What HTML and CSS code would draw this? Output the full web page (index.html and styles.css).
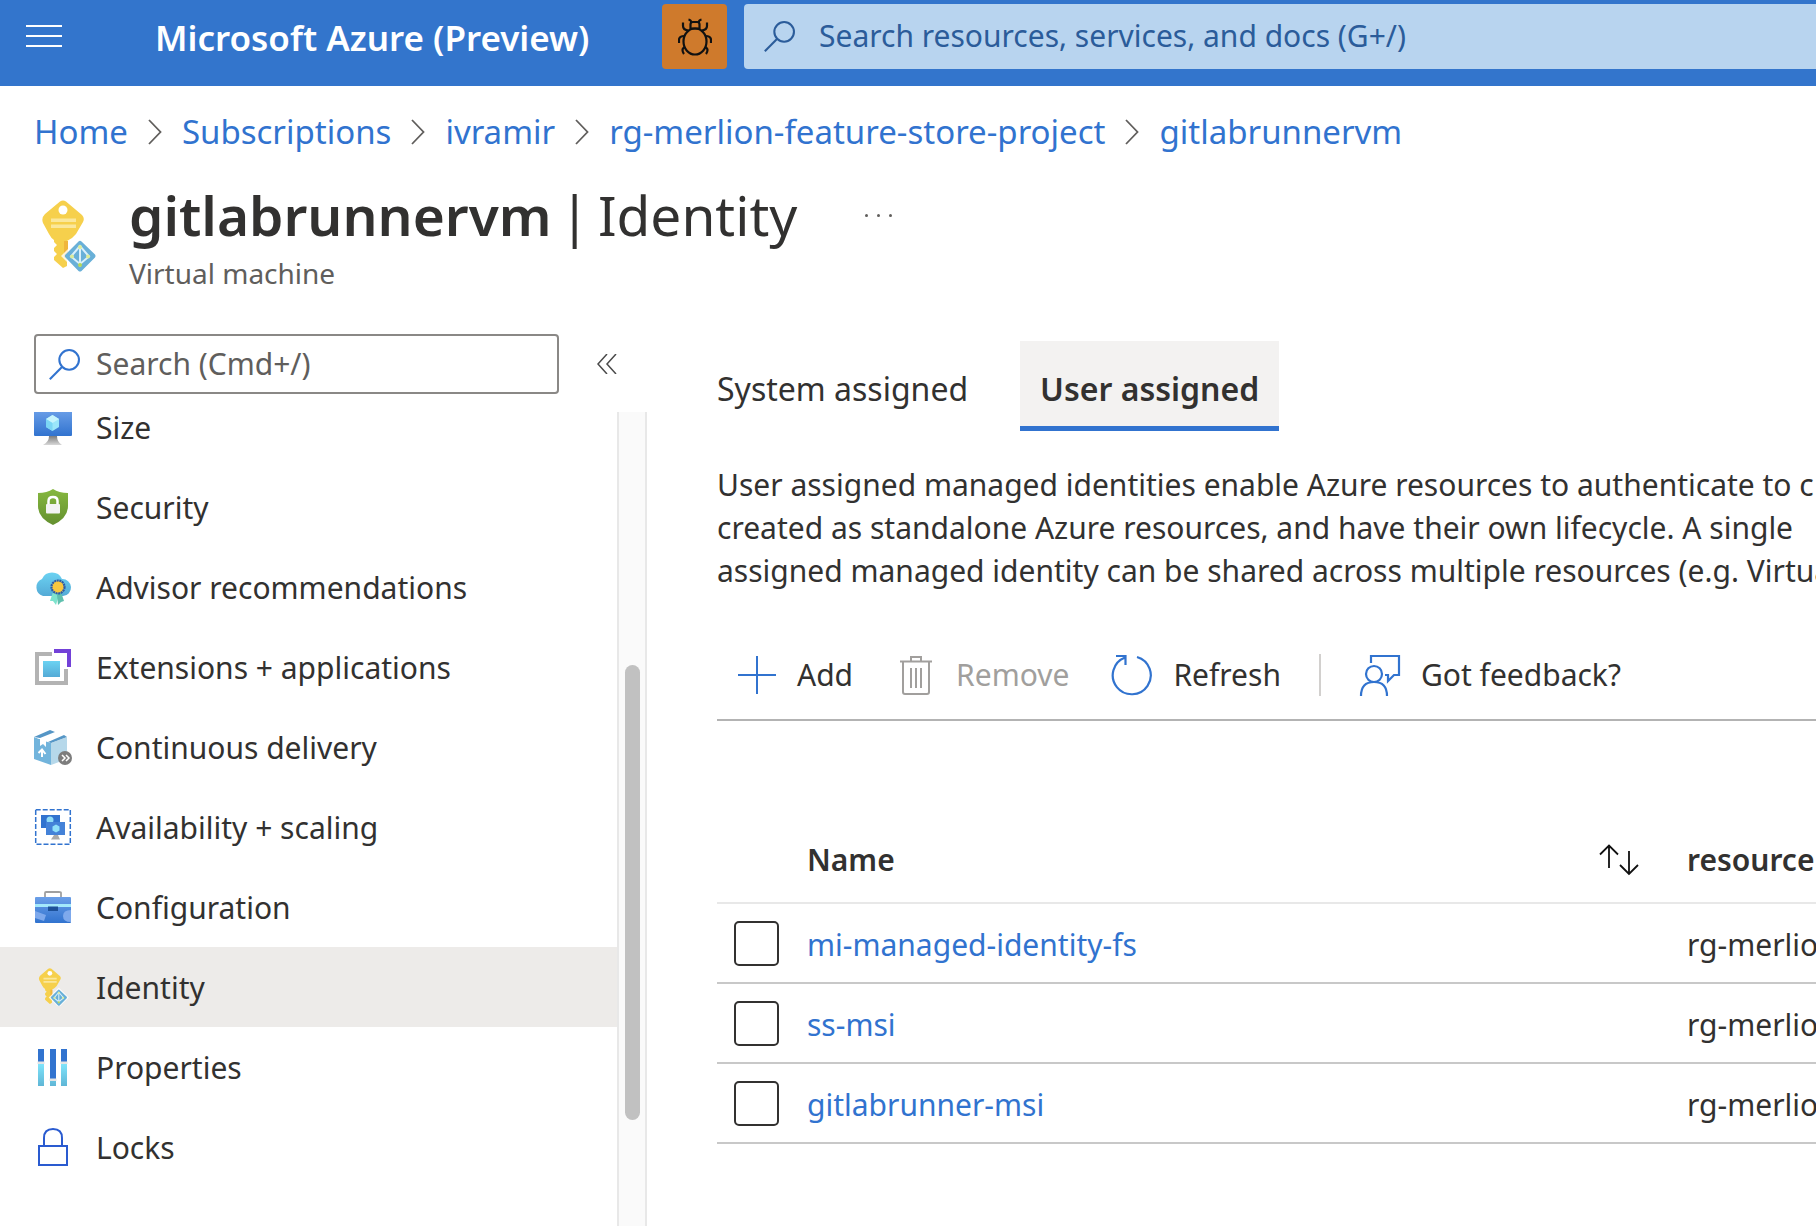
FILE: index.html
```html
<!DOCTYPE html>
<html lang="en">
<head>
<meta charset="utf-8">
<title>gitlabrunnervm | Identity - Microsoft Azure</title>
<link rel="stylesheet" href="styles.css">
</head>
<body>
<svg class="defs" aria-hidden="true">
  <defs>
    <linearGradient id="blue" x1="0" y1="0" x2="0" y2="1"><stop offset="0" stop-color="#6b9fe8"/><stop offset="1" stop-color="#3173cf"/></linearGradient>
    <linearGradient id="green" x1="0" y1="0" x2="0" y2="1"><stop offset="0" stop-color="#86b83f"/><stop offset="1" stop-color="#64902f"/></linearGradient>
    <linearGradient id="sky" x1="0" y1="0" x2="0" y2="1"><stop offset="0" stop-color="#6bd2f2"/><stop offset="1" stop-color="#54aad6"/></linearGradient>
    <linearGradient id="grey" x1="0" y1="0" x2="0" y2="1"><stop offset="0" stop-color="#7d7d7d"/><stop offset="1" stop-color="#d8d8d8"/></linearGradient>
    <linearGradient id="cyan" x1="0" y1="0" x2="0" y2="1"><stop offset="0" stop-color="#7fe4fb"/><stop offset="1" stop-color="#5fb6d6"/></linearGradient>
  </defs>
  <symbol id="key" viewBox="0 0 54 72">
    <path d="M18 1.500Q21-.5 24 1.500L40 15Q43 18 41 22L34 34Q30 39 25 41V66L21 68 12 60V57L15 54 12 51V48L15 45 12 42V40Q9 38 7 34L1 23Q-1 18 3 14Z" fill="#f6d04c"/>
    <path d="M22 41H26V54L22 58Z" fill="#f0b63c"/>
    <circle cx="21" cy="10" r="4.500" fill="#fff"/>
    <path d="M9 18.500H34V22H9ZM9 24.500H34V28H9Z" fill="#fae79b"/>
    <path d="M38 37L57 56 38 75 19 56Z" fill="#fff" opacity=".8"/>
    <path d="M36.500 41.500Q38 40 39.500 41.500L53 54.500Q54 56 53 57.500L39.500 71Q38 72 36.500 71L23.500 57.500Q22 56 23.500 54.500Z" fill="#69b0d8"/>
    <path d="M38 46V67M38 46L29 56.500 38 64 47 56.500Z" fill="none" stroke="#d9f0fb" stroke-width="2"/>
    <circle cx="38" cy="47" r="2" fill="#dcec9a"/><circle cx="30" cy="56.500" r="2" fill="#dcec9a"/><circle cx="46" cy="56.500" r="2" fill="#dcec9a"/><circle cx="38" cy="65" r="2" fill="#b8d957"/>
  </symbol>
  <symbol id="magnifier" viewBox="0 0 30 30">
    <circle cx="19.500" cy="10.500" r="9.500" fill="none" stroke="currentColor" stroke-width="2"/>
    <path d="M12.800 17.200L.8 29.200" stroke="currentColor" stroke-width="2"/>
  </symbol>
  <symbol id="chevron" viewBox="0 0 14 26"><path d="M1 1L12.500 13 1 25" fill="none" stroke="currentColor" stroke-width="1.800"/></symbol>
</svg>

<header class="topbar">
  <button class="hamburger" aria-label="Show portal menu"><span></span><span></span><span></span></button>
  <a class="brand" href="#">Microsoft Azure (Preview)</a>
  <button class="bug" aria-label="Report a bug">
    <svg width="34" height="38" viewBox="0 0 34 38" fill="none" stroke="#111" stroke-width="2.200">
      <ellipse cx="17" cy="23.500" rx="11.500" ry="13"/>
      <path d="M12.500 10.500V6.500Q12.500 4 15 4H19Q21.500 4 21.500 6.500V10.500ZM13.500 4.500Q13 2 10.500 1.500M20.500 4.500Q21 2 23.500 1.500M5 4.500V8Q5 12 10.500 12.500M29 4.500V8Q29 12 23.500 12.500M1 25V22Q1 18 6.500 18M33 25V22Q33 18 27.500 18M7 29Q4.500 30 4.500 32T6 36M27 29Q29.500 30 29.500 32T28 36"/>
    </svg>
  </button>
  <label class="global-search">
    <svg width="31" height="31"><use href="#magnifier"/></svg>
    <input type="text" aria-label="Search resources" placeholder="Search resources, services, and docs (G+/)">
  </label>
</header>

<nav class="breadcrumb" aria-label="Breadcrumb">
  <a href="#">Home</a><svg class="chev"><use href="#chevron"/></svg>
  <a href="#">Subscriptions</a><svg class="chev"><use href="#chevron"/></svg>
  <a href="#">ivramir</a><svg class="chev"><use href="#chevron"/></svg>
  <a href="#">rg-merlion-feature-store-project</a><svg class="chev"><use href="#chevron"/></svg>
  <a href="#">gitlabrunnervm</a>
</nav>

<div class="blade-head">
  <svg class="blade-icon"><use href="#key"/></svg>
  <div>
    <div class="title-row">
      <h1><strong>gitlabrunnervm</strong> <span>|</span> <span>Identity</span></h1>
      <button class="more" aria-label="More"><span></span><span></span><span></span></button>
    </div>
    <p class="subtitle">Virtual machine</p>
  </div>
</div>

<div class="workspace">
  <aside class="sidebar">
    <div class="side-tools">
      <label class="menu-search">
        <svg width="31" height="31"><use href="#magnifier"/></svg>
        <input type="text" aria-label="Search menu" placeholder="Search (Cmd+/)">
      </label>
      <button class="collapse" aria-label="Collapse menu">
        <svg width="20" height="20" viewBox="0 0 20 20" fill="none" stroke="#4a4a4a" stroke-width="1.500"><path d="M10 0L1 10 10 20M19 0L10 10 19 20"/></svg>
      </button>
    </div>
    <div class="menu-wrap">
      <nav class="menu-clip" aria-label="Resource menu">
        <ul class="menu">
          <li><a href="#"><svg viewBox="0 0 38 38"><rect y="2" width="38" height="26" rx="1" fill="url(#blue)"/><path d="M18.500 7L25 11V19L18.500 23 12 19V11Z" fill="#9be6fa"/><path d="M18.500 7L25 11 18.500 15 12 11Z" fill="#c6f4fd"/><path d="M18.500 15V23L12 19V11Z" fill="#7bd6f5"/><path d="M15 28H23Q23 34 28 37H9Q15 34 15 28Z" fill="url(#grey)"/></svg>Size</a></li>
          <li><a href="#"><svg viewBox="0 0 38 38"><path d="M4 5Q13 5 19 1Q25 5 34 5V18Q34 30 19 37Q4 30 4 18Z" fill="url(#green)"/><path d="M14.500 17V13Q14.500 9 19 9T23.500 13V17" fill="none" stroke="#fff" stroke-width="2.500"/><rect x="12" y="16" width="14" height="9.500" rx="1" fill="#f3f3f3"/></svg>Security</a></li>
          <li><a href="#"><svg viewBox="0 0 38 38"><path d="M9 28A9 9 0 0 1 8 11A11 11 0 0 1 28 11A8.500 8.500 0 0 1 29 28Z" fill="url(#sky)"/><path d="M19 24L16 33 19 33 22 37 25 27Z" fill="#7ee3cd"/><path d="M27 24L30 33 27 34 24 37 23 27Z" fill="#5fc0ae"/><circle cx="24" cy="19" r="6.500" fill="#f9c73f" stroke="#2c5ca8" stroke-width="2.200" stroke-dasharray="2 .6"/></svg>Advisor recommendations</a></li>
          <li><a href="#"><svg viewBox="0 0 38 38"><path d="M18 6H3V35H32V21" fill="none" stroke="#b3b3b3" stroke-width="4"/><path d="M20 3H35V19" fill="none" stroke="#7341d8" stroke-width="4"/><rect x="9" y="13" width="17" height="16" fill="url(#sky)"/></svg>Extensions + applications</a></li>
          <li><a href="#"><svg viewBox="0 0 38 38"><path d="M0 9L17 15V37L0 31Z" fill="#72b4dc"/><path d="M17 15L33 9V31L17 37Z" fill="#b6d8ea"/><path d="M0 9L17 2 33 9 17 15Z" fill="#fff"/><path d="M0 9L16 2 21 4 6 10ZM14 14L30 7 33 9 17 15Z" fill="#5596c6"/><path d="M6 10L12 12V19L9 16 6 18Z" fill="#fff"/><path d="M8 29V22M4.500 25L8 21.500 11.500 26" fill="none" stroke="#fff" stroke-width="2"/><circle cx="31" cy="30" r="7" fill="#7d7d7d"/><path d="M28 27L31 30 28 33M32 27L35 30 32 33" fill="none" stroke="#fff" stroke-width="1.500"/></svg>Continuous delivery</a></li>
          <li><a href="#"><svg viewBox="0 0 38 38"><rect x="1.700" y="1.700" width="34.600" height="34.600" fill="none" stroke="#3173cf" stroke-width="1.500" stroke-dasharray="5 2"/><rect x="7" y="7" width="19" height="13" fill="#3173cf"/><circle cx="16" cy="12" r="3.500" fill="#8fdcf8"/><rect x="12" y="14" width="19" height="13" fill="#4482d8"/><path d="M22 16.500L25.500 18.500V22.500L22 24.500 18.500 22.500V18.500Z" fill="#8fe0fa"/><path d="M20 27H24L26 31.500H17Z" fill="#aaa"/></svg>Availability + scaling</a></li>
          <li><a href="#"><svg viewBox="0 0 38 38"><path d="M11 10V5Q11 4 12 4H25Q27 4 27 5V10" fill="none" stroke="#a0a0a0" stroke-width="1.800"/><rect x="1" y="9" width="36" height="26" rx="1" fill="url(#blue)"/><path d="M1 16H37V19H1Z" fill="#a4e9fb"/><path d="M14 18.500H24V23H14Z" fill="#1d5199"/><path d="M1 23L12 27 10 33 1 30ZM37 22Q29 22 29 28T37 34Z" fill="#7ea9ec"/></svg>Configuration</a></li>
          <li><a class="current" href="#" aria-current="page"><svg><use href="#key"/></svg>Identity</a></li>
          <li><a href="#"><svg viewBox="0 0 38 38"><path d="M4 1H10V14H4ZM16 1H22V31H16ZM27 1H33V14H27Z" fill="#3173cf"/><path d="M4 16H10V38H4ZM27 16H33V38H27ZM16 32H22V38H16Z" fill="url(#cyan)"/><path d="M3.500 13.500H10.500V16H3.500ZM15.500 30.500H22.500V33H15.500ZM26.500 13.500H33.500V16H26.500Z" fill="#e4e4e4"/></svg>Properties</a></li>
          <li><a href="#"><svg viewBox="0 0 38 38"><rect x="5" y="18" width="28" height="19" fill="none" stroke="#2a5bd0" stroke-width="2"/><path d="M10 18V10Q10 1 19 1T28 10V18" fill="none" stroke="#2a5bd0" stroke-width="2"/></svg>Locks</a></li>
        </ul>
      </nav>
      <div class="scrollbar"><div class="thumb"></div></div>
    </div>
  </aside>

  <main class="content">
    <div class="tabs" role="tablist">
      <button class="tab" role="tab" aria-selected="false">System assigned</button>
      <button class="tab active" role="tab" aria-selected="true">User assigned</button>
    </div>
    <p class="intro">User assigned managed identities enable Azure resources to authenticate to c<br>created as standalone Azure resources, and have their own lifecycle. A single<br>assigned managed identity can be shared across multiple resources (e.g. Virtual</p>
    <div class="toolbar">
      <button><svg width="40" height="40" viewBox="0 0 40 40" fill="none" stroke="#3173cf" stroke-width="2"><path d="M20 1V39M1 20H39"/></svg>Add</button>
      <button class="remove" disabled><svg width="32" height="40" viewBox="0 0 32 40" fill="none" stroke="#a19f9d" stroke-width="2"><path d="M0 6.500H32M11 6V2H21V6M3 7V37Q3 39 5 39H27Q29 39 29 37V7M11 13V33M16 13V33M21 13V33"/></svg>Remove</button>
      <button class="refresh"><svg width="42" height="42" viewBox="0 0 42 42" fill="none" stroke="#3173cf" stroke-width="2.200"><path d="M26 3A19 19 0 1 1 14 3.500M5 2H14.500V11"/></svg>Refresh</button>
      <span class="divider"></span>
      <button class="feedback"><svg width="42" height="42" viewBox="0 0 42 42" fill="none" stroke="#3173cf" stroke-width="2.200"><path d="M12 9V2H40V21H35L29 27V21H26"/><circle cx="15" cy="20" r="8"/><path d="M2 42Q2 28 15 28T28 42"/></svg>Got feedback?</button>
    </div>
    <table class="grid">
      <colgroup><col class="c-check"><col class="c-name"><col></colgroup>
      <thead>
        <tr>
          <td></td>
          <th scope="col"><div class="th-in">Name<button class="sort" aria-label="Sort by name"><svg width="40" height="32" viewBox="0 0 40 32" fill="none" stroke="#111" stroke-width="1.800"><path d="M10 24V1.500M1 10.500L10 1.500 19 10.500M30 7V30M21 21L30 30 39 21"/></svg></button></div></th>
          <th scope="col">resource</th>
        </tr>
      </thead>
      <tbody>
        <tr><td><input type="checkbox" aria-label="Select mi-managed-identity-fs"></td><td><a href="#">mi-managed-identity-fs</a></td><td>rg-merlion</td></tr>
        <tr><td><input type="checkbox" aria-label="Select ss-msi"></td><td><a href="#">ss-msi</a></td><td>rg-merlion</td></tr>
        <tr><td><input type="checkbox" aria-label="Select gitlabrunner-msi"></td><td><a href="#">gitlabrunner-msi</a></td><td>rg-merlion</td></tr>
      </tbody>
    </table>
  </main>
</div>
</body>
</html>
```
FILE: styles.css
```css
* { box-sizing: border-box; }

body {
  margin: 0;
  min-height: 100vh;
  display: flex;
  flex-direction: column;
  overflow-x: hidden;
  background: #fff;
  color: #323130;
  font-family: "Noto Sans", "Open Sans", sans-serif;
  font-size: 30px;
  line-height: 43px;
}

a { color: #3173cf; text-decoration: none; }
h1, p, ul { margin: 0; padding: 0; }
svg { display: block; flex: none; }
button, input { font: inherit; color: inherit; }
button { padding: 0; border: 0; background: none; }
.defs { position: absolute; width: 0; height: 0; }

/* Top bar */
.topbar {
  display: flex;
  align-items: flex-start;
  height: 86px;
  padding: 4px 0 0 26px;
  background: #3375cc;
}
.hamburger { display: flex; flex-direction: column; gap: 8px; width: 36px; margin: 21px 93px 0 0; }
.hamburger span { height: 2px; background: #fff; }
.brand { width: 507px; color: #fff; font-size: 35px; font-weight: 600; line-height: 68px; white-space: nowrap; }
.bug { display: grid; place-items: center; width: 65px; height: 65px; margin-right: 17px; border-radius: 4px; background: #cf7a2c; }
.global-search {
  display: flex;
  flex: 1;
  align-items: center;
  gap: 24px;
  height: 65px;
  padding-left: 20px;
  border-radius: 4px 0 0 4px;
  background: #b8d4ef;
  color: #2b5c9a;
}
.global-search input, .menu-search input { flex: 1; min-width: 0; padding: 0 0 2px; border: 0; outline: 0; background: none; }
input::placeholder { color: inherit; opacity: 1; }

/* Breadcrumb and blade title */
.breadcrumb { display: flex; align-items: center; padding: 24px 34px 0; font-size: 33px; line-height: 44px; white-space: nowrap; }
.chev { width: 14px; height: 26px; margin: 0 20px; color: #605e5c; }
.blade-head { display: flex; gap: 33px; padding: 24px 42px 39px; }
.blade-icon { width: 54px; height: 72px; margin-top: 22px; }
.title-row { display: flex; align-items: center; gap: 68px; }
h1 { display: flex; gap: 8px; font-size: 55px; font-weight: 400; line-height: 74px; white-space: nowrap; }
h1 strong { font-weight: 600; }
.more { display: flex; gap: 9px; }
.more span { width: 3px; height: 3px; border-radius: 2px; background: #605e5c; }
.subtitle { color: #605e5c; font-size: 28px; line-height: 43px; }

/* Sidebar */
.workspace { display: grid; flex: 1; grid-template-columns: 647px minmax(0, 1fr); }
.sidebar { display: flex; flex-direction: column; }
.side-tools { display: flex; align-items: center; gap: 38px; padding: 0 30px 18px 34px; }
.menu-search {
  display: flex;
  flex: 1;
  align-items: center;
  gap: 16px;
  height: 60px;
  padding: 0 13px;
  border: 2px solid #8a8886;
  border-radius: 4px;
  color: #3173cf;
}
.menu-search input { color: #605e5c; }
.menu-wrap { display: flex; flex: 1; }
.menu-clip { flex: 1; overflow: hidden; }
.menu { margin-top: -25px; list-style: none; }
.menu a { display: flex; align-items: center; gap: 24px; height: 80px; padding: 0 34px; color: inherit; }
.menu svg { width: 38px; height: 38px; }
.menu .current { background: #edebe9; }
.scrollbar { width: 30px; padding: 253px 6px 0; border: solid #e8e8e8; border-width: 0 2px; background: #fafafa; }
.thumb { width: 15px; height: 455px; border-radius: 8px; background: #c1c1c1; }

/* Content */
.content { padding: 7px 0 0 70px; overflow: hidden; }
.tabs { display: flex; gap: 52px; }
.tab { height: 90px; padding: 10px 0 0; border-bottom: 5px solid transparent; font-size: 32px; }
.tab.active { padding: 10px 20px 0; border-color: #3173cf; background: #f3f2f1; font-weight: 600; }
.intro { margin-top: 32px; white-space: nowrap; }
.toolbar { display: flex; align-items: center; height: 91px; margin-top: 38px; padding-left: 20px; border-bottom: 2px solid #b3b3b3; }
.toolbar button { display: flex; align-items: center; gap: 20px; white-space: nowrap; }
.toolbar .remove { gap: 24px; margin-left: 47px; color: #a19f9d; }
.toolbar .refresh { margin-left: 42px; }
.divider { width: 2px; height: 42px; margin: 0 38px; background: #d2d0ce; }

.grid { width: 100%; margin-top: 101px; border-spacing: 0; table-layout: fixed; white-space: nowrap; }
.c-check { width: 90px; }
.c-name { width: 880px; }
.grid tr { height: 80px; }
.grid thead tr { height: 82px; }
.grid td, .grid th { padding: 2px 0 0; overflow: hidden; border-bottom: 2px solid #c8c8c8; text-align: left; font-weight: 400; }
.grid thead td, .grid thead th { padding: 0 0 5px; border-color: #e8e8e8; font-weight: 600; }
.grid td:first-child { padding: 0; }
.th-in { display: flex; align-items: center; justify-content: space-between; padding-right: 48px; }
.grid input {
  display: block;
  width: 45px;
  height: 45px;
  margin: 0 0 0 17px;
  border: 2px solid #323130;
  border-radius: 5px;
  background: #fff;
  appearance: none;
}
```
